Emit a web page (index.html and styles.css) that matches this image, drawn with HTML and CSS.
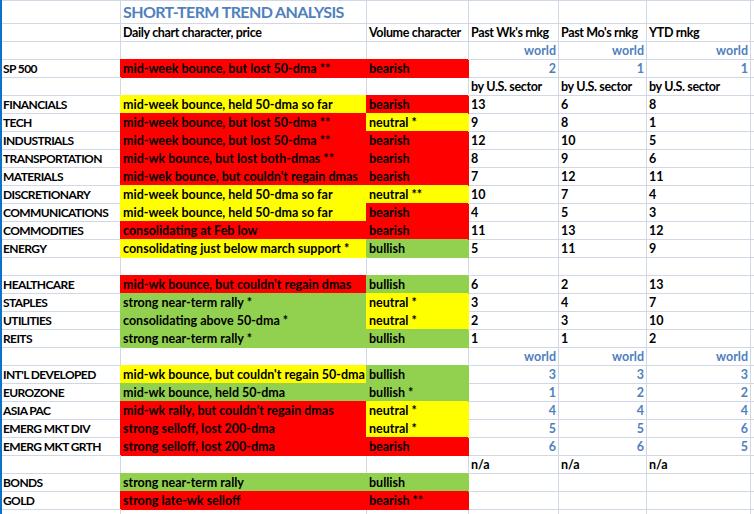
FILE: index.html
```html
<!DOCTYPE html>
<html>
<head>
<meta charset="utf-8">
<link rel="stylesheet" href="styles.css">
</head>
<body>
<div class="sheet">
  <div class="grid">
    <!-- row 1 -->
    <div class="c title-row"></div><div class="c title-row title">SHORT-TERM TREND ANALYSIS</div><div class="c title-row"></div><div class="c title-row"></div><div class="c title-row"></div><div class="c title-row"></div><div class="c title-row"></div>
    <!-- row 2 -->
    <div class="c"></div><div class="c hd">Daily chart character, price</div><div class="c hd">Volume character</div><div class="c hd">Past Wk's rnkg</div><div class="c hd">Past Mo's rnkg</div><div class="c hd">YTD rnkg</div><div class="c"></div>
    <!-- row 3 -->
    <div class="c"></div><div class="c"></div><div class="c"></div><div class="c r blue">world</div><div class="c r blue">world</div><div class="c r blue">world</div><div class="c"></div>
    <!-- SP 500 -->
    <div class="c lbl">SP 500</div><div class="c red">mid-week bounce, but lost 50-dma **</div><div class="c red">bearish</div><div class="c r blue">2</div><div class="c r blue">1</div><div class="c r blue">1</div><div class="c"></div>
    <!-- by sector -->
    <div class="c"></div><div class="c"></div><div class="c"></div><div class="c hd">by U.S. sector</div><div class="c hd">by U.S. sector</div><div class="c hd">by U.S. sector</div><div class="c"></div>

    <div class="c lbl">FINANCIALS</div><div class="c yel">mid-week bounce, held 50-dma so far</div><div class="c red">bearish</div><div class="c">13</div><div class="c">6</div><div class="c">8</div><div class="c"></div>
    <div class="c lbl">TECH</div><div class="c red">mid-week bounce, but lost 50-dma **</div><div class="c yel">neutral *</div><div class="c">9</div><div class="c">8</div><div class="c">1</div><div class="c"></div>
    <div class="c lbl">INDUSTRIALS</div><div class="c red">mid-week bounce, but lost 50-dma **</div><div class="c red">bearish</div><div class="c">12</div><div class="c">10</div><div class="c">5</div><div class="c"></div>
    <div class="c lbl">TRANSPORTATION</div><div class="c red">mid-wk bounce, but lost both-dmas **</div><div class="c red">bearish</div><div class="c">8</div><div class="c">9</div><div class="c">6</div><div class="c"></div>
    <div class="c lbl">MATERIALS</div><div class="c red">mid-wek bounce, but couldn't regain dmas</div><div class="c red">bearish</div><div class="c">7</div><div class="c">12</div><div class="c">11</div><div class="c"></div>
    <div class="c lbl">DISCRETIONARY</div><div class="c yel">mid-week bounce, held 50-dma so far</div><div class="c yel">neutral **</div><div class="c">10</div><div class="c">7</div><div class="c">4</div><div class="c"></div>
    <div class="c lbl">COMMUNICATIONS</div><div class="c yel">mid-week bounce, held 50-dma so far</div><div class="c red">bearish</div><div class="c">4</div><div class="c">5</div><div class="c">3</div><div class="c"></div>
    <div class="c lbl">COMMODITIES</div><div class="c red">consolidating at Feb low</div><div class="c red">bearish</div><div class="c">11</div><div class="c">13</div><div class="c">12</div><div class="c"></div>
    <div class="c lbl">ENERGY</div><div class="c yel">consolidating just below march support *</div><div class="c grn">bullish</div><div class="c">5</div><div class="c">11</div><div class="c">9</div><div class="c"></div>
    <!-- empty -->
    <div class="c"></div><div class="c"></div><div class="c"></div><div class="c"></div><div class="c"></div><div class="c"></div><div class="c"></div>

    <div class="c lbl">HEALTHCARE</div><div class="c red">mid-wk bounce, but couldn't regain dmas</div><div class="c grn">bullish</div><div class="c">6</div><div class="c">2</div><div class="c">13</div><div class="c"></div>
    <div class="c lbl">STAPLES</div><div class="c grn">strong near-term rally *</div><div class="c yel">neutral *</div><div class="c">3</div><div class="c">4</div><div class="c">7</div><div class="c"></div>
    <div class="c lbl">UTILITIES</div><div class="c grn">consolidating above 50-dma *</div><div class="c yel">neutral *</div><div class="c">2</div><div class="c">3</div><div class="c">10</div><div class="c"></div>
    <div class="c lbl">REITS</div><div class="c grn">strong near-term rally *</div><div class="c grn">bullish</div><div class="c">1</div><div class="c">1</div><div class="c">2</div><div class="c"></div>
    <!-- world -->
    <div class="c"></div><div class="c"></div><div class="c"></div><div class="c r blue">world</div><div class="c r blue">world</div><div class="c r blue">world</div><div class="c"></div>

    <div class="c lbl">INT'L DEVELOPED</div><div class="c yel">mid-wk bounce, but couldn't regain 50-dma</div><div class="c grn">bullish</div><div class="c r blue">3</div><div class="c r blue">3</div><div class="c r blue">3</div><div class="c"></div>
    <div class="c lbl">EUROZONE</div><div class="c grn">mid-wk bounce, held 50-dma</div><div class="c grn">bullish *</div><div class="c r blue">1</div><div class="c r blue">2</div><div class="c r blue">2</div><div class="c"></div>
    <div class="c lbl">ASIA PAC</div><div class="c red">mid-wk rally, but couldn’t regain dmas</div><div class="c yel">neutral *</div><div class="c r blue">4</div><div class="c r blue">4</div><div class="c r blue">4</div><div class="c"></div>
    <div class="c lbl">EMERG MKT DIV</div><div class="c red">strong selloff, lost 200-dma</div><div class="c yel">neutral *</div><div class="c r blue">5</div><div class="c r blue">5</div><div class="c r blue">6</div><div class="c"></div>
    <div class="c lbl">EMERG MKT GRTH</div><div class="c red">strong selloff, lost 200-dma</div><div class="c red">bearish</div><div class="c r blue">6</div><div class="c r blue">6</div><div class="c r blue">5</div><div class="c"></div>
    <!-- n/a -->
    <div class="c"></div><div class="c"></div><div class="c"></div><div class="c">n/a</div><div class="c">n/a</div><div class="c">n/a</div><div class="c"></div>

    <div class="c lbl">BONDS</div><div class="c grn">strong near-term rally</div><div class="c grn">bullish</div><div class="c"></div><div class="c"></div><div class="c"></div><div class="c"></div>
    <div class="c lbl">GOLD</div><div class="c red">strong late-wk selloff</div><div class="c red">bearish **</div><div class="c"></div><div class="c"></div><div class="c"></div><div class="c"></div>
    <!-- partial -->
    <div class="c"></div><div class="c"></div><div class="c"></div><div class="c"></div><div class="c"></div><div class="c"></div><div class="c"></div>
  </div>
</div>
</body>
</html>
```

FILE: styles.css
```css
html, body {
  margin: 0;
  padding: 0;
  background: #fff;
  overflow: hidden;
}

.sheet {
  width: 754px;
  height: 514px;
  overflow: hidden;
  border-left: 2px solid #0c72cc;
  box-sizing: border-box;
}

.grid {
  display: grid;
  grid-template-columns: 119px 246px 102px 90px 88px 104px 100px;
  grid-template-rows: 23px repeat(28, 18px);
  border-top: 1px solid #d0d7e5;
  background: #fff;
  font-family: Lato, "Open Sans", sans-serif;
  font-weight: 700;
  font-size: 12.5px;
  color: #000;
}

.c {
  box-sizing: border-box;
  border-right: 1px solid #d0d7e5;
  border-bottom: 1px solid #d0d7e5;
  padding: 0 2px;
  line-height: 17px;
  white-space: nowrap;
  overflow: visible;
}

.lbl {
  padding-left: 1px;
  font-size: 12px;
  letter-spacing: -0.6px;
}

.hd {
  letter-spacing: -0.35px;
}

.title-row {
  line-height: 22px;
}

.title {
  font-size: 16px;
  letter-spacing: -0.6px;
  color: #4f81bd;
  z-index: 1;
}

.r {
  text-align: right;
}

.blue {
  color: #4f81bd;
}

.red {
  background: #ff0000;
  border-color: #ff0000;
  box-shadow: -1px -1px 0 0 #ff0000;
}

.yel {
  background: #ffff00;
  border-color: #ffff00;
  box-shadow: -1px -1px 0 0 #ffff00;
}

.grn {
  background: #92d050;
  border-color: #92d050;
  box-shadow: -1px -1px 0 0 #92d050;
}
```
